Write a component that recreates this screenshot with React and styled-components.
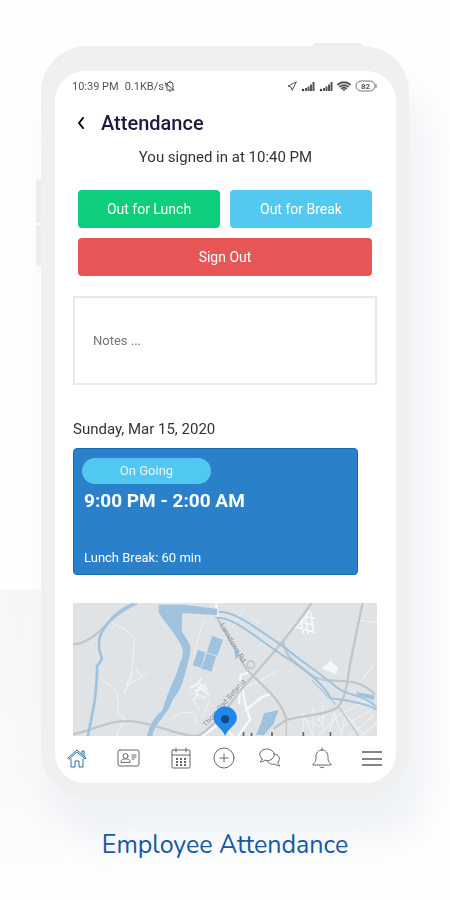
import React from "react";
import styled, { createGlobalStyle } from "styled-components";

const GlobalStyle = createGlobalStyle`
  * { box-sizing: border-box; }
  body {
    margin: 0;
    background: #fefefe;
    font-family: Roboto, "Liberation Sans", sans-serif;
    color: #333;
  }
  button, textarea { font: inherit; }
`;

const Page = styled.main`
  position: relative;
  min-height: 100vh;
  padding: 46px 41px 32px;
  overflow: hidden;
`;

const Backdrop = styled.div`
  position: absolute;
  inset: 590px 0 0 0;
  background: linear-gradient(180deg, #f6f7f7 0, #f8f9fa 60%, #fefefe 100%);
  mask-image: linear-gradient(90deg, #000 10%, transparent 30%);
`;

const Phone = styled.div`
  position: relative;
  padding: 25px 13px 15px 14px;
  border-radius: 46px;
  background: #f0f0f0;
  box-shadow: 16px 40px 40px rgba(203, 216, 224, 0.3);
`;

const SideKey = styled.span`
  position: absolute;
  left: -5px;
  top: ${(p) => p.$top}px;
  width: 5px;
  height: ${(p) => p.$height}px;
  background: #ececec;
  border-radius: 3px 0 0 3px;
`;

const TopKey = styled.span`
  position: absolute;
  right: 47px;
  top: -3px;
  width: 49px;
  height: 3px;
  background: #ebebeb;
  border-radius: 3px 3px 0 0;
`;

const Screen = styled.div`
  background: #fff;
  border-radius: 30px;
  overflow: hidden;
`;

const StatusBar = styled.div`
  display: flex;
  justify-content: space-between;
  align-items: center;
  height: 30px;
  padding: 0 19px 0 17px;
  font-size: 11px;
  color: #555;
`;

const StatusGroup = styled.div`
  display: flex;
  align-items: center;
  gap: ${(p) => p.$gap}px;
`;

const Header = styled.header`
  display: flex;
  align-items: center;
  gap: 12px;
  height: 44px;
  padding: 0 18px;
`;

const BackButton = styled.button`
  display: flex;
  justify-content: center;
  width: 16px;
  padding: 0;
  border: 0;
  background: none;
`;

const Title = styled.h1`
  margin: 0;
  font-size: 20px;
  line-height: 24px;
  font-weight: 500;
  color: #1c1a3c;
`;

const SignedIn = styled.p`
  margin: 0;
  font-size: 15px;
  line-height: 24px;
  text-align: center;
`;

const Actions = styled.div`
  display: grid;
  grid-template-columns: 1fr 1fr;
  gap: 10px;
  padding: 21px 24px 0 23px;
`;

const ActionButton = styled.button`
  grid-column: ${(p) => (p.$wide ? "1 / -1" : "auto")};
  height: 38px;
  padding: 0;
  border: 0;
  border-radius: 4px;
  background: ${(p) => p.$color};
  color: #fff;
  font-size: 14px;
`;

const Content = styled.div`
  padding: 20px 19px 0 18px;
`;

const Notes = styled.textarea`
  display: block;
  width: 100%;
  height: 89px;
  padding: 34px 18px;
  border: 2px solid #e9e9e9;
  border-radius: 0;
  background: #fff;
  resize: none;
  font-size: 13px;
  line-height: 18px;
  &::placeholder { color: #777; opacity: 1; }
`;

const DateLabel = styled.h2`
  margin: 32px 0 7px;
  font-size: 15px;
  line-height: 24px;
  font-weight: 400;
`;

const ShiftCard = styled.section`
  display: flex;
  flex-direction: column;
  align-items: flex-start;
  height: 127px;
  margin-right: 19px;
  padding: 9px 10px 8px;
  border: 1px solid #136eb4;
  border-radius: 4px;
  background: #2a80c9;
  color: #fff;
`;

const Badge = styled.span`
  width: 129px;
  border-radius: 13px;
  background: #50c8f2;
  color: #e3f8ff;
  font-size: 13px;
  line-height: 26px;
  text-align: center;
  margin-left: -2px;
`;

const ShiftTime = styled.strong`
  margin-top: 5px;
  font-size: 19px;
  line-height: 24px;
  font-weight: 700;
`;

const ShiftBreak = styled.span`
  margin-top: auto;
  font-size: 13px;
  line-height: 16px;
`;

const Map = styled.svg`
  display: block;
  width: 100%;
  height: 133px;
  margin-top: 28px;
  background: #dfe3e6;
`;

const Nav = styled.nav`
  display: flex;
  justify-content: space-between;
  align-items: flex-start;
  height: 47px;
  padding: 11px 14px 0 12px;
`;

const NavLink = styled.a`
  display: flex;
  margin: 0 ${(p) => (p.$tight ? "-8px" : "0")};
  color: ${(p) => (p.$active ? "#2873a8" : "#666")};
`;

const Caption = styled.p`
  position: relative;
  margin: 30px 0 0;
  font-family: Nunito, Lato, sans-serif;
  font-size: 25px;
  line-height: 34px;
  text-align: center;
  color: #1757a3;
`;

const Line = styled.svg`
  display: block;
  fill: none;
  stroke: currentColor;
  stroke-width: ${(p) => p.$weight || 1};
  stroke-linecap: ${(p) => p.$cap || "round"};
  stroke-linejoin: round;
`;

const Signal = () => (
  <Line width="14" height="11" viewBox="0 0 14 11" $weight={2} $cap="butt">
    <path d="M5 10V7M7.500 10V5.500M10 10V3.500M12.500 10V1" />
    <circle cx="2" cy="9" r="1.200" fill="#333" stroke="none" />
  </Line>
);

const MapView = () => (
  <Map viewBox="0 0 913 398" preserveAspectRatio="xMidYMid slice" role="img" aria-label="Current location">
    <g fill="none" strokeLinecap="round" strokeLinejoin="round">
      <g stroke="#eff2f3" strokeWidth="3">
        <path d="M118 60l40 18 28 28-5 64-6 60-20 38M84 226l42 32 12 36-4 32 24 20-20 34-8 24M190 195l18 28-48 24 22-44M208 218l16-8M394 48l-31 102M347 270l20-28 6 12 30-12M352 270l48 12-40 4 20 34M300 346c30-28 80-26 68 18M390 340l20-50M560 62l-24 -18M525 250l92-48" />
        <path d="M850 50l60 8M866 230l36-44M480 70l35-55M690 390v-60l30 68v-80l30 50v-58M770 390l12-60 24 64 10-60 60 62M790 340l110-60M810 370l100-60M730 350l55-32M830 398l70-60M862 398l50-40M680 340l60 30M735 398l60-60" />
      </g>
      <g stroke="#f7f9f9" strokeWidth="7">
        <path d="M533 206l-30 10-4 84M506 240l12 66 14 42-35 48M518 320c28-18 45-45 72-46M390 398l55-42 35 42M430 4l5 38" />
      </g>
      <g stroke="#f6f8f8" strokeWidth="5">
        <path d="M650 85l30-22 30-40M665 70l60 18M680 55l44 12M695 42l30 4M690 90l-6-40M705 92l-8-50M720 80l-6-48" />
        <path d="M352 252l24-10 8-16M366 262l36-6-20-14M370 280l10-30 28 24" />
      </g>
      <path d="M745 195l28-22 10 10 12 10-6 20-20-8z" fill="#f6f8f8" />
      <g stroke="#c0c6c9" strokeWidth="7">
        <path d="M0 124c62-2 104-68 134-88C156 20 177 8 190 4M0 394c82-20 120-50 194-38s130 45 180 42c38-14 88-82 136-146 88-96 150-170 204-250" />
        <path d="M436 50c36 62 66 116 84 146 50 56 108 94 120 154 70-18 120-14 154-38 30-38 28-88 40-146l34-166M630 112c8 50 22 54 84 104 60 36 126-8 190 56M640 350l-36 24" />
        <path d="M640 350v48M796 308l60 90" strokeWidth="4" />
        <circle cx="534" cy="184" r="11" strokeWidth="5" />
      </g>
      <g stroke="#9fc3df">
        <path d="M180 4C118 30 78 90 80 116c-6 48 24 38-6 72-2 100-14 140-28 210" strokeWidth="8" />
        <path d="M430 44c48-4 104 48 204 116 80 48 120 90 140 126 40 4 100 14 134 32M440 26c50 0 110 50 194 106 60 50 110 80 156 120 40 30 80 20 118 58" strokeWidth="6" />
        <path d="M718 232l70 72" strokeWidth="3" />
      </g>
    </g>
    <g fill="#9fc3df">
      <path d="M258 5h75l100 12v20l-104-7-2 54c26 44 35 42 18 98-16 60-18 74-44 106-20 54-54 68-62 110h-16c10-42 28-62 46-76 20-70 44-104 52-142 16-28 10-50-8-74-20-34-40-50-55-78z" />
      <path d="M418 98l32 12-16 48-32-10zM402 150l28 10-14 46-31-10zM376 140l22 8-14 46-24-8zM484 142l10-2 4 18-10 12zM573 330l44-10-16 42-28 34-24-2 16-36zM850 266l54 10-2 14-50-14z" />
    </g>
    <g fill="#8d9194" fontFamily="Roboto, sans-serif" fontSize="22">
      <text transform="translate(440 66) rotate(59)">Lansdown Rd</text>
      <text transform="translate(400 372) rotate(-49)">Thorn Oad Betania</text>
    </g>
    <path d="M512 386v12M536 388v10M597 386v12M691 386v12M772 386v12" stroke="#666" strokeWidth="5" />
    <path d="M457 398c-8-22-35-34-35-53a35 35 0 0 1 70 0c0 19-27 31-35 53z" fill="#2188ea" />
    <circle cx="457" cy="348" r="12" fill="#114a84" />
  </Map>
);

export default function App() {
  return (
    <>
      <GlobalStyle />
      <Page>
        <Backdrop />
        <Phone>
          <SideKey $top={134} $height={43} />
          <SideKey $top={179} $height={41} />
          <TopKey />
          <Screen>
            <StatusBar>
              <StatusGroup $gap={6}>
                <span>10:39 PM</span>
                <StatusGroup $gap={0}>
                  <span>0.1KB/s</span>
                  <Line width="12" height="12" viewBox="0 0 12 12">
                    <path d="M3 9V5a3 3 0 0 1 6 0v4l1 1H3M6 1v1M1 3l9 7M5 11h2M2 3v3" />
                  </Line>
                </StatusGroup>
              </StatusGroup>
              <StatusGroup $gap={4}>
                <Line width="10" height="10" viewBox="0 0 10 10">
                  <path d="M9 1L1 5l3 1 1 3z" />
                </Line>
                <Signal />
                <Signal />
                <Line width="14" height="11" viewBox="0 0 14 11" $weight={2}>
                  <path d="M1 3.500c4-3 8-3 12 0M3 5.500c3-2 5-2 8 0M5 7.500c1-1 3-1 4 0M7 9v0" />
                </Line>
                <svg width="22" height="12" viewBox="0 0 22 12" role="img" aria-label="Battery 82">
                  <rect x="1" y="1" width="19" height="10" rx="5" fill="none" stroke="#777" />
                  <path d="M21 4v4" stroke="#777" />
                  <text x="10.5" y="9" fontSize="8" fontWeight="700" textAnchor="middle" fill="#555">82</text>
                </svg>
              </StatusGroup>
            </StatusBar>
            <Header>
              <BackButton aria-label="Back">
                <Line width="8" height="12" viewBox="0 0 8 12" $weight={2}>
                  <path d="M6 1L2 6l4 5" />
                </Line>
              </BackButton>
              <Title>Attendance</Title>
            </Header>
            <SignedIn>You signed in at 10:40 PM</SignedIn>
            <Actions>
              <ActionButton $color="#0dce7a">Out for Lunch</ActionButton>
              <ActionButton $color="#55c8f1">Out for Break</ActionButton>
              <ActionButton $color="#e85557" $wide>Sign Out</ActionButton>
            </Actions>
            <Content>
              <Notes aria-label="Notes" placeholder="Notes ..." />
              <DateLabel>Sunday, Mar 15, 2020</DateLabel>
              <ShiftCard>
                <Badge>On Going</Badge>
                <ShiftTime>9:00 PM - 2:00 AM</ShiftTime>
                <ShiftBreak>Lunch Break: 60 min</ShiftBreak>
              </ShiftCard>
              <MapView />
            </Content>
            <Nav aria-label="Main">
              <NavLink href="#home" aria-label="Home" $active>
                <Line width="20" height="22" viewBox="0 0 20 22">
                  <path d="M1 11l9-8 9 8-1 1-8-7-8 7zM15 7V4h2v5M4 12v8h4v-6h4v6h4v-8" />
                </Line>
              </NavLink>
              <NavLink href="#profile" aria-label="Profile">
                <Line width="24" height="22" viewBox="0 0 24 22">
                  <rect x="1" y="3" width="21" height="16" rx="2" />
                  <circle cx="8.5" cy="9" r="2.5" />
                  <path d="M4 15c0-3 2-3 4.500-3s4.500 0 4.500 3zM15 8h4M15 10h4M15 12h2" />
                </Line>
              </NavLink>
              <NavLink href="#calendar" aria-label="Calendar">
                <Line width="20" height="22" viewBox="0 0 20 22">
                  <rect x="1" y="3" width="18" height="18" rx="1" />
                  <path d="M1 8h18M5 1v4M15 1v4" />
                  <path d="M5 12h2M9 12h2M13 12h2M5 15h2M9 15h2M13 15h2M5 18h2M9 18h2M13 18h2" strokeWidth="2" strokeLinecap="butt" />
                </Line>
              </NavLink>
              <NavLink href="#add" aria-label="Add" $tight>
                <Line width="22" height="22" viewBox="0 0 22 22">
                  <circle cx="11" cy="11" r="10" />
                  <path d="M7 11h8M11 7v8" />
                </Line>
              </NavLink>
              <NavLink href="#messages" aria-label="Messages">
                <Line width="24" height="22" viewBox="0 0 24 22">
                  <path d="M4 12C-1 7 3 2 9 2s10 6 5 10c-3 2-5 2-7 1-1 1-3 2-5 2 1-1 2-2 2-3zM16 7c5 0 7 5 4 8 0 2 1 3 2 4-2 0-4-1-5-2-3 1-6 0-8-3" />
                </Line>
              </NavLink>
              <NavLink href="#alerts" aria-label="Notifications">
                <Line width="20" height="22" viewBox="0 0 20 22">
                  <path d="M10 1v2M10 3c-4 0-6 3-6 7 0 5-1 5-3 7v1h18v-1c-2-2-3-2-3-7 0-4-2-7-6-7zM8 20c1 1 3 1 4 0" />
                </Line>
              </NavLink>
              <NavLink href="#menu" aria-label="Menu">
                <Line width="20" height="22" viewBox="0 0 20 22" $weight={2} $cap="butt">
                  <path d="M0 5h20M0 12h20M0 18h20" stroke="#858585" />
                </Line>
              </NavLink>
            </Nav>
          </Screen>
        </Phone>
        <Caption>Employee Attendance</Caption>
      </Page>
    </>
  );
}
